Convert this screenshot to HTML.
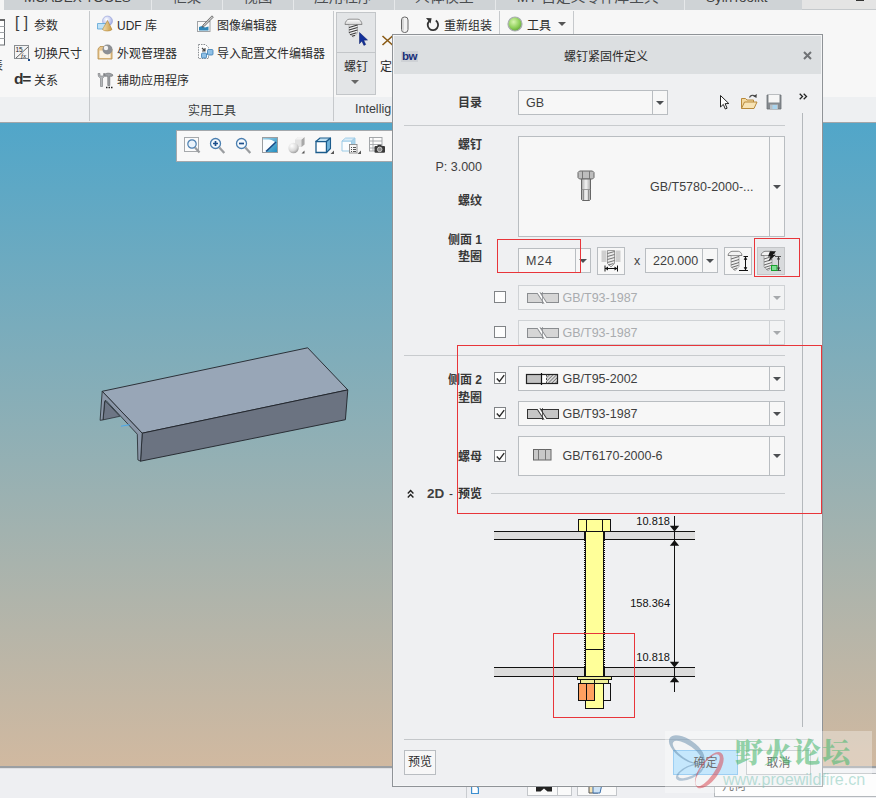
<!DOCTYPE html>
<html lang="zh-CN">
<head>
<meta charset="utf-8">
<title>螺钉紧固件定义</title>
<style>
html,body{margin:0;padding:0;}
body{width:876px;height:798px;overflow:hidden;position:relative;background:#f0f0f3;
 font-family:"Liberation Sans","Noto Sans CJK SC",sans-serif;font-size:12px;color:#2b2b2b;}
.abs{position:absolute;}
.t{position:absolute;white-space:nowrap;line-height:16px;height:16px;}
.b{font-weight:bold;}
.r{color:#383838;}
.en{color:#3f3f3f;}
.en{font-size:12.5px;}
.r{text-align:right;}
svg{position:absolute;overflow:visible;}
/* app chrome */
#tabs{left:0;top:0;width:876px;height:10px;background:#f5f5f5;overflow:hidden;}
#tabs .bg{left:4px;top:0;width:798px;height:10px;background:#cfd3d6;}
#tabs .bg2{left:802px;top:0;width:74px;height:9px;background:#e4e4e4;border-bottom:1px solid #c5c9cc;}
#tabs .sep{top:0;width:1px;height:10px;background:#e6e8ea;}
#tabs .t{top:-13px;font-size:14.67px;color:#4a4d50;line-height:20px;height:20px;}
#tabs .en{font-size:13.5px;}
#ribbon{left:0;top:10px;width:876px;height:87px;background:#f7f7f7;}
#riblab{left:0;top:97px;width:876px;height:25px;background:#eef0f2;}
#ribline{left:0;top:122px;width:876px;height:1px;background:#a3a6a9;}
.vsep{width:1px;background:#c6c9cc;}
#view{left:0;top:123px;width:876px;height:644px;background:linear-gradient(#51a6c9,#d1b9a0);}
#viewline{left:0;top:766px;width:876px;height:2px;background:#9b9fa3;}
#status{left:0;top:768px;width:876px;height:30px;background:#eeeff2;border-top:1px solid #dfe0e3;box-sizing:border-box;}
/* dialog */
#dlg{left:392px;top:34px;width:429px;height:751px;background:#eff0f2;border:1px solid #8f9397;box-sizing:content-box;box-shadow:inset 0 0 0 1px #f4f5f6;}
#dlgtitle{left:1px;top:1px;width:427px;height:38px;background:#dcdfe1;}
.box{position:absolute;box-sizing:border-box;border:1px solid #b9bdc1;background:#f7f7f7;}
.box.dis{border-color:#cfd2d5;background:#f2f3f4;}
.box .ds{position:absolute;top:0;bottom:0;right:14px;width:1px;background:#b9bdc1;}
.box .arr{right:3px;}
.box.dis .ds{background:#cfd2d5;}
.arr{position:absolute;width:0;height:0;border-left:4px solid transparent;border-right:4px solid transparent;border-top:4.500px solid #4c4f52;}
.arr.dis{border-top-color:#a6a9ac;}
.cb{position:absolute;box-sizing:border-box;width:12px;height:12px;border:1px solid #808386;background:#fdfdfd;}
.hl{position:absolute;height:1px;background:#c8cbce;}
.red{position:absolute;box-sizing:border-box;border:1px solid #e8353a;}
.btn{position:absolute;box-sizing:border-box;border:1px solid #b9bdc1;background:#f7f7f7;text-align:center;}
</style>
</head>
<body>
<!-- ===== application chrome ===== -->
<div id="tabs" class="abs">
 <div class="bg abs"></div><div class="bg2 abs"></div>
 <div class="abs" style="left:856px;top:0;width:8px;height:1px;background:#333"></div>
 <div class="sep abs" style="left:151px"></div>
 <div class="sep abs" style="left:222px"></div>
 <div class="sep abs" style="left:293px"></div>
 <div class="sep abs" style="left:394px"></div>
 <div class="sep abs" style="left:495px"></div>
 <div class="sep abs" style="left:684px"></div>
 <div class="t" style="left:24px"><span class="en">MCADEX TOOLS</span></div>
 <div class="t" style="left:172px">框架</div>
 <div class="t" style="left:243px">视图</div>
 <div class="t" style="left:314px">应用程序</div>
 <div class="t" style="left:415px">人体模型</div>
 <div class="t" style="left:517px"><span class="en">MY</span> 自定义零件库工具</div>
 <div class="t" style="left:706px"><span class="en">SylnToolkt</span></div>
</div>
<div id="ribbon" class="abs"></div>
<div id="riblab" class="abs"></div>
<div id="ribline" class="abs"></div>
<div class="vsep abs" style="left:89px;top:11px;height:110px"></div>
<div class="vsep abs" style="left:333px;top:11px;height:110px"></div>
<div class="vsep abs" style="left:499px;top:11px;height:24px"></div>
<div class="vsep abs" style="left:573px;top:11px;height:24px"></div>
<!-- ribbon group 1 -->
<svg style="left:0;top:19px" width="6" height="27" viewBox="0 0 6 27"><rect x="-12" y="1" width="16.500" height="25" fill="#fff" stroke="#6a6e72"/><path d="M-12 1h17" stroke="#555" stroke-width="1.600"/><path d="M-12 7.500H4.500M-12 13.500H4.500M-12 19.500H4.500" stroke="#a0a4a8" fill="none"/></svg>
<div class="t" style="left:-9px;top:58px">表</div>
<div class="t" style="left:-8px;top:101px;color:#555">▾</div>
<div class="t" style="left:15px;top:15px;font-size:15.500px;letter-spacing:4.500px;color:#3a3a3a;transform:scaleY(1.08);transform-origin:0 50%">[]</div>
<div class="t" style="left:34px;top:18px">参数</div>
<svg style="left:14px;top:45px" width="17" height="17" viewBox="0 0 17 17"><rect x="0.5" y="0.5" width="14" height="13" fill="#f4f4f4" stroke="#8a8e92"/><path d="M2 13L14 2" stroke="#666" fill="none"/><text x="1.5" y="7" font-size="6.5" font-family="Liberation Sans,sans-serif" fill="#222">15</text><text x="7" y="13" font-size="7" font-style="italic" font-family="Liberation Serif,serif" fill="#222">fx</text><rect x="14" y="14" width="2" height="2" fill="#1b4a8a"/></svg>
<div class="t" style="left:34px;top:46px">切换尺寸</div>
<div class="t b" style="left:14px;top:71px;font-size:15.5px;letter-spacing:-1.2px;color:#333">d=</div>
<div class="t" style="left:34px;top:73px">关系</div>
<!-- ribbon group 2 -->
<svg style="left:97px;top:16px" width="16" height="17" viewBox="0 0 16 17"><defs><radialGradient id="ud" cx=".4" cy=".35" r=".7"><stop offset="0" stop-color="#fff"/><stop offset="1" stop-color="#9aa6e2"/></radialGradient><linearGradient id="uc" x1="0" y1="0" x2="1" y2="0"><stop offset="0" stop-color="#f3dfb0"/><stop offset="1" stop-color="#c99a45"/></linearGradient></defs><circle cx="10.500" cy="5" r="5" fill="url(#ud)" stroke="#8a96d4" stroke-width=".5"/><path d="M.5 7.500h8.500v5.500H.5z" fill="#bfe2f7" stroke="#5ba3d4" stroke-width=".8"/><path d="M10.500 4.500L15 13.500c-2 2-7.500 2-9.500 0z" fill="url(#uc)" stroke="#b48734" stroke-width=".6"/></svg>
<div class="t" style="left:117px;top:18px">UDF 库</div>
<svg style="left:97px;top:43px" width="17" height="17" viewBox="0 0 17 17"><path d="M1 6l2-2.5h5L9.5 6H15v10H1z" fill="#e6c48c" stroke="#b58e4a" stroke-width=".8"/><rect x="2.5" y="7.500" width="11" height="7.500" fill="#fbf3e2"/><circle cx="10.5" cy="6.500" r="5" fill="#8d9094"/><circle cx="9" cy="5" r="2.200" fill="#f2f2f2"/></svg>
<div class="t" style="left:117px;top:46px">外观管理器</div>
<svg style="left:97px;top:72px" width="17" height="17" viewBox="0 0 17 17"><path d="M1 1.500l.5 3 2 1.700v8.300h2V6.200l2-1.700.5-3H6.500v2.500h-3.500v-2.500z" fill="#b4b7ba" stroke="#77797c" stroke-width=".6"/><path d="M7.500 2.500c2-1.800 6-1.800 8.500.5l-.8 1.200H12.800V13.500h-2V4.200H8z" fill="#a0a3a7" stroke="#606366" stroke-width=".6"/><path d="M9 15.500h1.500M11.500 15.500h1.500M14 15.500h1.500" stroke="#222" stroke-width="1.300"/></svg>
<div class="t" style="left:117px;top:73px">辅助应用程序</div>
<svg style="left:197px;top:15px" width="17" height="18" viewBox="0 0 17 18"><rect x=".5" y="6.500" width="12.500" height="10" fill="#fafafa" stroke="#a0a3a6"/><path d="M2 15.500v-3.500l3-1 3 1.500 3.500-1v4z" fill="#2f86b8"/><path d="M15 .8L6 10l-.8 2.200 2.100-.9L16.300 2.200z" fill="#c9c9c9" stroke="#4a4a4a" stroke-width=".7"/></svg>
<div class="t" style="left:217px;top:18px">图像编辑器</div>
<svg style="left:197px;top:43px" width="18" height="18" viewBox="0 0 18 18"><path d="M1.500 1.500h7l3 3V15.500h-10z" fill="#fdfdfd" stroke="#8a8e92" stroke-dasharray="1.500 1"/><path d="M5 5l3 3M8 5v3H5" stroke="#444" fill="none" stroke-width="1.100"/><rect x="4.500" y="10" width="5" height="5" rx="1" fill="#8fc0e6" stroke="#3c7fb4" stroke-width=".8"/><rect x="10.500" y="6.500" width="5.500" height="5.500" rx="1" fill="#8fc0e6" stroke="#3c7fb4" stroke-width=".8"/><path d="M9.500 12l1-1.500" stroke="#3c7fb4"/></svg>
<div class="t" style="left:217px;top:46px">导入配置文件编辑器</div>
<div class="t" style="left:188px;top:103px;color:#3a3d40">实用工具</div>
<!-- ribbon group 3 -->
<div class="abs" style="left:336px;top:12px;width:40px;height:83px;box-sizing:border-box;background:#e3e5e7;border:1px solid #c3c6c9"></div>
<div class="abs" style="left:337px;top:52px;width:38px;height:1px;background:#c3c6c9"></div>
<svg style="left:344px;top:17px" width="26" height="30" viewBox="0 0 26 30"><defs><linearGradient id="sh" x1="0" y1="0" x2="0" y2="1"><stop offset="0" stop-color="#fff"/><stop offset="1" stop-color="#d4d4d4"/></linearGradient></defs><path d="M1 7.500C1 4.500 3.500 2.200 5 2.200h9c1.500 0 4 2.300 4 5.300z" fill="url(#sh)" stroke="#7a7a7a" stroke-width=".8"/><path d="M5 7.700h8.500v8.500l-4.200 3.800L5 16.200z" fill="#f2f2f2" stroke="#8a8a8a" stroke-width=".5"/><path d="M5 10.500l8.500-2.500M5 13l8.500-2.500M5 15.500l8.500-2.500M6 17.700l6.500-2M8 19.300l3-1" stroke="#3a3a3a" stroke-width="1.100" fill="none"/><path d="M15.500 15.500l8 7.500-3.800.3 2 4.200-1.800.9-2-4.300-2.400 2.600z" fill="#12309a" stroke="#0a1c66" stroke-width=".5"/></svg>
<div class="t" style="left:344px;top:59px">螺钉</div>
<div class="arr" style="left:351px;top:80px;border-left-width:4px;border-right-width:4px;border-top-width:4px;border-top-color:#666"></div>
<svg style="left:380px;top:35px" width="13" height="11" viewBox="0 0 13 11"><path d="M2.500 1l10 9M2.500 10L12.500 1" stroke="#8a5a14" stroke-width="1.600" fill="none"/></svg>
<div class="t" style="left:380px;top:59px">定</div>
<div class="t" style="left:355px;top:101px;color:#3a3d40;font-size:12.500px">Intellig</div>
<!-- ribbon right strip -->
<svg style="left:400px;top:16px" width="10" height="18" viewBox="0 0 10 18"><rect x="1.500" y="1" width="6.500" height="15.500" rx="3" fill="#f2f2f2" stroke="#666"/><path d="M3 2.500v12" stroke="#bbb"/></svg>
<svg style="left:426px;top:17px" width="13" height="14" viewBox="0 0 13 14"><path d="M3.300 4.200A5.200 5.200 0 1 0 9.800 3.600" fill="none" stroke="#333" stroke-width="1.800"/><path d="M0 1l5.600.2-1 5.300z" fill="#333"/></svg>
<div class="t" style="left:444px;top:18px">重新组装</div>
<svg style="left:507px;top:16px" width="16" height="16" viewBox="0 0 16 16"><defs><radialGradient id="gb" cx=".4" cy=".35" r=".7"><stop offset="0" stop-color="#d8f5b0"/><stop offset=".6" stop-color="#8fd05a"/><stop offset="1" stop-color="#5fa036"/></radialGradient></defs><circle cx="8" cy="8" r="7" fill="url(#gb)" stroke="#a9adb0" stroke-width="1.200"/></svg>
<div class="t" style="left:527px;top:18px">工具</div>
<div class="arr" style="left:558px;top:22px;border-top-color:#555"></div>

<div id="view" class="abs"></div>
<div id="viewline" class="abs"></div>
<div id="status" class="abs"></div>

<!-- 3D model -->
<svg style="left:90px;top:340px" width="270" height="130" viewBox="90 340 270 130">
 <path d="M102.200 391.300L307.700 347.800L347.800 389.900L142.200 433.200z" fill="#98a6b7" stroke="#20242a" stroke-width=".9" stroke-linejoin="round"/>
 <path d="M142.200 433.200L347.800 389.900L345.400 419.700L140.500 461.200z" fill="#6b7381" stroke="#20242a" stroke-width=".9" stroke-linejoin="round"/>
 <path d="M105 400.600L103 419.900L119.900 416.300z" fill="#6d7685" stroke="#20242a" stroke-width=".7" stroke-linejoin="round"/>
 <path d="M102.200 391.300L100.100 420.300L103 419.900L104.600 401.500Q105 399.800 106.300 400.800L137.300 434.200L137.900 459.900L140.500 461.200L142.200 433.200z" fill="#8b97a8" stroke="#20242a" stroke-width=".8" stroke-linejoin="round"/>
 <path d="M121 426.200l9-1.500" stroke="#4aa8ee" stroke-width="1"/>
</svg>
<!-- graphics toolbar -->
<div class="abs" style="left:176px;top:130px;width:230px;height:32px;box-sizing:border-box;background:#f8f8f8;border:1px solid #a4a8ac"></div>
<svg style="left:184px;top:137px" width="17" height="17" viewBox="0 0 17 17"><rect x=".5" y=".5" width="14" height="14" fill="#fbfbfb" stroke="#a6a9ac"/><circle cx="8" cy="7" r="4.200" fill="#eaf3fb" stroke="#4b7fb0" stroke-width="1.200"/><path d="M11 10.500l4.500 5" stroke="#9a9da0" stroke-width="2.200"/></svg>
<svg style="left:209px;top:137px" width="17" height="17" viewBox="0 0 17 17"><circle cx="6.500" cy="6.500" r="5" fill="#f4f9fd" stroke="#4b7fb0" stroke-width="1.300"/><path d="M4 6.500h5M6.500 4v5" stroke="#1c4f8c" stroke-width="1.700"/><path d="M10.300 10.500l5 5.500" stroke="#9a9da0" stroke-width="2.300"/></svg>
<svg style="left:235px;top:137px" width="17" height="17" viewBox="0 0 17 17"><circle cx="6.500" cy="6.500" r="5" fill="#f4f9fd" stroke="#4b7fb0" stroke-width="1.300"/><path d="M4 6.500h5" stroke="#1c4f8c" stroke-width="1.700"/><path d="M10.300 10.500l5 5.500" stroke="#9a9da0" stroke-width="2.300"/></svg>
<svg style="left:262px;top:137px" width="16" height="16" viewBox="0 0 16 16"><defs><linearGradient id="rp" x1="0" y1="0" x2="1" y2="1"><stop offset="0" stop-color="#9fd3ea"/><stop offset="1" stop-color="#1f8cbf"/></linearGradient></defs><rect x=".5" y=".5" width="15" height="15" fill="url(#rp)" stroke="#9a9da0"/><path d="M1 2.500H7Q12.500 3.500 13.500 6L4 15H1z" fill="#fafdff"/><path d="M4 14.500l10-9.500" stroke="#174a86" stroke-width="1.600"/></svg>
<svg style="left:288px;top:137px" width="20" height="18" viewBox="0 0 20 18"><defs><radialGradient id="sp" cx=".35" cy=".3" r=".8"><stop offset="0" stop-color="#fff"/><stop offset=".6" stop-color="#d8d8d8"/><stop offset="1" stop-color="#909090"/></radialGradient></defs><path d="M7 2.500l3-2.500h6.500v7.500l-3 2.500H7z" fill="#e2e2e2"/><path d="M13.500 2.500l3-2.500v7.500l-3 2.500z" fill="#a8a8a8"/><path d="M7 2.500l3-2.500h6.500l-3 2.500z" fill="#f2f2f2"/><circle cx="5.500" cy="11" r="5.200" fill="url(#sp)"/><path d="M16.500 13.500v3h-3z" fill="#555"/></svg>
<svg style="left:315px;top:137px" width="20" height="18" viewBox="0 0 20 18"><path d="M1 4.500h10.500V15.500H1z" fill="#fff" stroke="#1c5c8c" stroke-width="1.300"/><path d="M1 4.500L5 1h10.500L11.500 4.500z" fill="#bfe0f2" stroke="#1c5c8c" stroke-width="1.100" stroke-linejoin="round"/><path d="M11.500 4.500L15.500 1V11.500L11.500 15.500z" fill="#6fb3da" stroke="#1c5c8c" stroke-width="1.100" stroke-linejoin="round"/><path d="M19 13.500v3.500h-3.500z" fill="#555"/></svg>
<svg style="left:341px;top:137px" width="21" height="18" viewBox="0 0 21 18"><path d="M1 4h9.500v10H1z" fill="#fbfdfe" stroke="#9ccbe6" stroke-width="1"/><path d="M1 4L4.500 1H14L10.500 4z" fill="#d8ecf7" stroke="#9ccbe6" stroke-width=".9"/><path d="M10.500 4L14 1V10.500L10.500 14z" fill="#a9d3ea" stroke="#9ccbe6" stroke-width=".9"/><rect x="8.500" y="7.500" width="7.500" height="8.500" fill="#f6f6f6" stroke="#8a8a8a" stroke-width=".9"/><path d="M10 10.500h1M12 10.500h2.500M10 12.500h1M12 12.500h2.500M10 14.500h1M12 14.500h2.500" stroke="#555" stroke-width="1" shape-rendering="crispEdges"/><path d="M20 13.500v3.500h-3.500z" fill="#555"/></svg>
<svg style="left:368px;top:137px" width="18" height="17" viewBox="0 0 18 17"><rect x="1.500" y=".5" width="12.500" height="13.500" fill="#fcfcfc" stroke="#a4a7aa"/><path d="M1.500 4h12.500M1.500 7.500h12.500M1.500 11h12.500M5 .5v13.500" stroke="#a4a7aa" stroke-width=".9"/><rect x="6.500" y="9" width="10.500" height="6.800" rx="1" fill="#3a3a3a"/><rect x="9.500" y="7.800" width="4" height="1.800" fill="#3a3a3a"/><circle cx="11.700" cy="12.400" r="2.300" fill="#8d8d8d" stroke="#dedede" stroke-width=".8"/></svg>
<!-- status bar -->
<div class="abs" style="left:466px;top:770px;width:1px;height:28px;background:#c9ccd0"></div>
<svg style="left:471px;top:786px" width="8" height="9" viewBox="0 0 8 9"><path d="M.6 0h5l1.800 2v5.500H.6z" fill="#fff" stroke="#3c8fd0" stroke-width="1.200"/></svg>
<div class="abs" style="left:527px;top:770px;width:45px;height:26px;box-sizing:border-box;background:#fafafa;border:1px solid #c3c6ca"></div>
<div class="abs" style="left:557px;top:771px;width:1px;height:24px;background:#c3c6ca"></div>
<svg style="left:536px;top:786px" width="16" height="6" viewBox="0 0 16 6"><path d="M0 0h16v5.500h-4.500L8 2.500 4.500 5.500H0z" fill="#222"/></svg>
<div class="abs" style="left:577px;top:770px;width:40px;height:26px;box-sizing:border-box;background:#fafafa;border:1px solid #c3c6ca"></div>
<svg style="left:588px;top:784px" width="16" height="10" viewBox="0 0 16 10"><path d="M1 0h9v9H1z" fill="#f7e3b4" stroke="#555" stroke-width="1"/><path d="M5 0h9l-2 9H5z" fill="#cfe3f5" stroke="#3c6fa8" stroke-width="1"/></svg>
<div class="abs" style="left:714px;top:773px;width:170px;height:24px;box-sizing:border-box;background:#fdfdfd;border:1px solid #b4b8bc"></div>
<div class="t" style="left:722px;top:778px;font-size:12px;color:#444">几何</div>
<!-- ===== dialog ===== -->
<div id="dlg" class="abs">
 <div id="dlgtitle" class="abs"></div>
</div>
<!-- title -->
<div class="abs" style="left:401px;top:51px;width:17px;height:11px;background:#ced1d5"></div>
<div class="t b" style="left:402px;top:48px;font-size:11.500px;letter-spacing:-.5px;color:#182f7a">bw</div>
<div class="t" style="left:564px;top:49px;color:#2b2b2b">螺钉紧固件定义</div>
<svg style="left:803px;top:51px" width="9" height="9" viewBox="0 0 9 9"><path d="M1 1l7 7M8 1L1 8" stroke="#6f7275" stroke-width="2" fill="none"/></svg>
<!-- row: catalog -->
<div class="t b r" style="left:402px;width:80px;top:95px">目录</div>
<div class="box" style="left:518px;top:90px;width:150px;height:25px"><div class="ds"></div><div class="arr" style="top:10px"></div></div>
<div class="t en" style="left:526px;top:95px">GB</div>
<svg style="left:719px;top:94px" width="11" height="17" viewBox="0 0 11 17"><path d="M1.500 1.500v11.500l2.800-2.600 2 4.600 1.800-.8-2-4.500 3.700-.2z" fill="#fff" stroke="#222" stroke-width="1"/></svg>
<svg style="left:740px;top:93px" width="18" height="17" viewBox="0 0 18 17"><path d="M1.500 15.500V5.500h4l1.500 1.500h6.500v2.500" fill="#f3d9a0" stroke="#b8893a" stroke-width="1"/><path d="M1.500 15.500l3-6.500h12.500l-3 6.500z" fill="#f7e3b4" stroke="#b8893a" stroke-width="1"/><path d="M9.500 4.500c1-2.500 4-3 5.500-1" fill="none" stroke="#444" stroke-width="1.200"/><path d="M16.800 1l-.3 4-3.300-1.800z" fill="#444"/></svg>
<svg style="left:766px;top:94px" width="16" height="16" viewBox="0 0 16 16"><path d="M1 1h14v14H1z" fill="#858a8f" stroke="#6a6f74" stroke-width=".8"/><rect x="2.500" y="1" width="11" height="7.500" fill="#f6f6f6"/><rect x="4" y="10.500" width="8" height="4.500" fill="#b9c0c6"/><rect x="6.500" y="11" width="4.500" height="4" fill="#a9d4ee"/></svg>
<svg style="left:799px;top:93px" width="9" height="7" viewBox="0 0 9 7"><path d="M.7 .8l2.800 2.700-2.800 2.700M4.700 .8l2.800 2.700-2.800 2.700" fill="none" stroke="#222" stroke-width="1.300"/></svg>
<div class="hl" style="left:404px;top:125px;width:381px"></div>
<div class="abs" style="left:802px;top:113px;width:1px;height:614px;background:#b4b8bc"></div>
<div class="hl" style="left:404px;top:739px;width:410px;background:#c4c7ca"></div>

<!-- screw section -->
<div class="t b r" style="left:402px;width:80px;top:137px">螺钉</div>
<div class="t r en" style="left:402px;width:80px;top:159px">P: 3.000</div>
<div class="t b r" style="left:402px;width:80px;top:193px">螺纹</div>
<div class="box" style="left:518px;top:136px;width:267px;height:101px"><div class="ds"></div><div class="arr" style="top:48px"></div></div>
<svg style="left:577px;top:170px" width="18" height="31" viewBox="0 0 18 31"><defs><linearGradient id="bs" x1="0" y1="0" x2="1" y2="0"><stop offset="0" stop-color="#a8a8a8"/><stop offset=".5" stop-color="#f4f4f4"/><stop offset="1" stop-color="#a8a8a8"/></linearGradient></defs><path d="M1 2.500L2.500 1h13L17 2.500v5L15.500 9h-13L1 7.500z" fill="#bdbdbd" stroke="#666" stroke-width="1"/><path d="M5.500 1v8M12.500 1v8" stroke="#777" stroke-width="1"/><path d="M4.500 9h9v20.500l-1 1h-7l-1-1z" fill="url(#bs)" stroke="#666" stroke-width="1"/><path d="M4.500 19.500h9" stroke="#888" stroke-width=".8"/><path d="M6.500 20v10M11.500 20v10" stroke="#8a8a8a" stroke-width=".9"/></svg>
<div class="t en" style="left:650px;top:179px">GB/T5780-2000-...</div>
<div class="t b r" style="left:402px;width:80px;top:232px">侧面 1</div>
<div class="t b r" style="left:402px;width:80px;top:249px">垫圈</div>
<div class="box" style="left:518px;top:248px;width:73px;height:25px"><div class="ds"></div><div class="arr" style="top:10px"></div></div>
<div class="t en" style="left:526px;top:253px;letter-spacing:.8px">M24</div>
<div class="btn" style="left:597px;top:247px;width:28px;height:28px"></div>
<svg style="left:598px;top:248px" width="26" height="26" viewBox="0 0 26 26"><rect x="3.500" y="2.500" width="5" height="11.500" fill="#cfcfcf"/><rect x="17.500" y="2.500" width="5" height="11.500" fill="#cfcfcf"/><path d="M9.500 2.500h7v13l-3.500 3.500-3.500-3.500z" fill="#ececec" stroke="#777" stroke-width=".7"/><path d="M9.500 5.500l7-2M9.500 8.500l7-2M9.500 11.500l7-2M9.500 14.500l7-2M10.500 17l5-1.500" stroke="#666" stroke-width=".9"/><path d="M7 17.500v6M19.500 17.500v6M7 20.500h12.500" stroke="#111" stroke-width="1" fill="none"/><path d="M7 20.500l3-2v4zM19.500 20.500l-3-2v4z" fill="#111"/></svg>
<div class="t en" style="left:634px;top:253px">x</div>
<div class="box" style="left:645px;top:248px;width:73px;height:25px"><div class="ds"></div><div class="arr" style="top:10px"></div></div>
<div class="t en" style="left:653px;top:253px">220.000</div>
<div class="btn" style="left:724px;top:247px;width:28px;height:28px"></div>
<svg style="left:724px;top:247px" width="28" height="28" viewBox="0 0 28 28"><path d="M4 8.500C4 6 7 4.300 8 4.300h6.500C15.500 4.300 18 6 18 8.500z" fill="#f2f2f2" stroke="#6a6a6a" stroke-width=".8"/><path d="M7 8.600h8V19.500l-4 4.300-4-4.300z" fill="#efefef" stroke="#808080" stroke-width=".6"/><path d="M7 12l8-2.500M7 15l8-2.500M7 18l8-2.500M7.500 20.500l7-2.200M9.500 22.500l3.500-1.500" stroke="#5a5a5a" stroke-width=".9" fill="none"/><path d="M21.500 9.500v14M19.500 9.500h4.500M15 23.500h9" stroke="#111" stroke-width="1" fill="none"/><path d="M21.500 9.500l-1.800 3.200h3.600zM21.500 23.500l-1.800-3.200h3.600z" fill="#111"/></svg>
<div class="abs" style="left:757px;top:247px;width:28px;height:28px;box-sizing:border-box;background:#d8dadc;border:1px solid #c3c5c7"></div>
<svg style="left:757px;top:247px" width="28" height="28" viewBox="0 0 28 28"><path d="M4 8.500C4 6 7 4.300 8 4.300h6.500C15.500 4.300 18 6 18 8.500z" fill="#f2f2f2" stroke="#6a6a6a" stroke-width=".8"/><path d="M7 8.600h8V19.500l-4 4.300-4-4.300z" fill="#efefef" stroke="#808080" stroke-width=".6"/><path d="M7 12l8-2.500M7 15l8-2.500M7 18l8-2.500M7.500 20.500l7-2.200M9.500 22.500l3.500-1.500" stroke="#5a5a5a" stroke-width=".9" fill="none"/><path d="M13 4.200h6L16 8h2.500l-7.100 6.400 2.100-4.900H11z" fill="#181818"/><path d="M21.500 9.500v14M18 9.500h6M20 23.500h4" stroke="#333" stroke-width=".8" fill="none"/><path d="M21.500 9.500l-1.600 3h3.200zM21.500 23.500l-1.600-3h3.200z" fill="#333"/><rect x="14.500" y="18.500" width="5.500" height="5" fill="#80de96" stroke="#18a02c" stroke-width="1"/></svg>
<div class="red" style="left:497px;top:239px;width:84px;height:34px"></div>
<div class="red" style="left:754px;top:238px;width:46px;height:39px"></div>
<!-- side 1 washers (disabled) -->
<div class="cb" style="left:494px;top:291px"></div>
<div class="box dis" style="left:518px;top:285px;width:267px;height:25px"><div class="ds"></div><div class="arr dis" style="top:10px"></div></div>
<div class="t en" style="left:562.500px;top:290px;color:#a9acaf">GB/T93-1987</div>
<div class="cb" style="left:494px;top:326px"></div>
<div class="box dis" style="left:518px;top:320px;width:267px;height:25px"><div class="ds"></div><div class="arr dis" style="top:10px"></div></div>
<div class="t en" style="left:562.500px;top:325px;color:#a9acaf">GB/T93-1987</div>
<div class="hl" style="left:404px;top:355px;width:381px"></div>
<!-- side 2 -->
<div class="t b r" style="left:402px;width:80px;top:372px">侧面 2</div>
<div class="t b r" style="left:402px;width:80px;top:390px">垫圈</div>
<div class="cb" style="left:494px;top:372px"></div>
<div class="box" style="left:518px;top:366px;width:267px;height:25px"><div class="ds"></div><div class="arr" style="top:10px"></div></div>
<div class="t en" style="left:562.500px;top:371px">GB/T95-2002</div>
<div class="cb" style="left:494px;top:407px"></div>
<div class="box" style="left:518px;top:401px;width:267px;height:25px"><div class="ds"></div><div class="arr" style="top:10px"></div></div>
<div class="t en" style="left:562.500px;top:406px">GB/T93-1987</div>
<div class="t b r" style="left:402px;width:80px;top:449px">螺母</div>
<div class="cb" style="left:494px;top:450px"></div>
<div class="box" style="left:518px;top:436px;width:267px;height:40px"><div class="ds"></div><div class="arr" style="top:17px"></div></div>
<div class="t en" style="left:562.500px;top:448px">GB/T6170-2000-6</div>
<svg style="left:527px;top:292px" width="32" height="12" viewBox="0 0 32 12"><rect x=".5" y="1.500" width="31" height="9" fill="#d6d6d6" stroke="#8a8d90" stroke-width="1"/><path d="M11.700 1l6.600 10" stroke="#8a8d90" stroke-width="3.600"/><path d="M11.400 .5l7.200 11" stroke="#fff" stroke-width="1.800"/><path d="M15.500 0v12" stroke="#8a8d90" stroke-width=".8"/></svg>
<svg style="left:527px;top:327px" width="32" height="12" viewBox="0 0 32 12"><rect x=".5" y="1.500" width="31" height="9" fill="#d6d6d6" stroke="#8a8d90" stroke-width="1"/><path d="M11.700 1l6.600 10" stroke="#8a8d90" stroke-width="3.600"/><path d="M11.400 .5l7.200 11" stroke="#fff" stroke-width="1.800"/><path d="M15.500 0v12" stroke="#8a8d90" stroke-width=".8"/></svg>
<svg style="left:526px;top:373px" width="32" height="12" viewBox="0 0 32 12"><defs><pattern id="hh" width="2.500" height="2.500" patternUnits="userSpaceOnUse" patternTransform="rotate(45)"><rect width="2.500" height="2.500" fill="#d8d8d8"/><path d="M0 0v2.500" stroke="#555" stroke-width="1.200"/></pattern></defs><rect x=".5" y="1.500" width="15" height="9" fill="#c2c2c2"/><rect x="15.500" y="1.500" width="5" height="9" fill="#fff"/><rect x="20.500" y="1.500" width="11" height="9" fill="url(#hh)"/><rect x=".5" y="1.500" width="31" height="9" fill="none" stroke="#222" stroke-width="1.200"/><path d="M15.500 0v12" stroke="#111" stroke-width="1.200"/><path d="M20.500 1.500v9" stroke="#444" stroke-width="1" stroke-dasharray="2 1.500"/></svg>
<svg style="left:527px;top:408px" width="32" height="12" viewBox="0 0 32 12"><rect x=".5" y="1.500" width="31" height="9" fill="#c6c6c6" stroke="#333" stroke-width="1"/><path d="M11.700 1l6.600 10" stroke="#333" stroke-width="3.600"/><path d="M11.400 .5l7.200 11" stroke="#fff" stroke-width="1.800"/><path d="M15.500 0v12" stroke="#333" stroke-width=".8"/></svg>
<svg style="left:533px;top:449px" width="19" height="12" viewBox="0 0 19 12"><rect x=".5" y=".5" width="17.500" height="10.500" fill="#c9c9c9" stroke="#666" stroke-width="1"/><path d="M5.500 .5v10.500M12.500 .5v10.500" stroke="#777" stroke-width="1"/></svg>
<svg style="left:494px;top:372px" width="13" height="13" viewBox="0 0 13 13"><path d="M2.800 6.500l2.700 3 4.700-6.300" fill="none" stroke="#2a2a2a" stroke-width="1.400"/></svg>
<svg style="left:494px;top:407px" width="13" height="13" viewBox="0 0 13 13"><path d="M2.800 6.500l2.700 3 4.700-6.300" fill="none" stroke="#2a2a2a" stroke-width="1.400"/></svg>
<svg style="left:494px;top:450px" width="13" height="13" viewBox="0 0 13 13"><path d="M2.800 6.500l2.700 3 4.700-6.300" fill="none" stroke="#2a2a2a" stroke-width="1.400"/></svg>
<!-- 2D preview header -->
<svg style="left:406px;top:489px" width="9" height="10" viewBox="0 0 9 10"><path d="M1.800 4.500l2.800-3 2.800 3M1.800 8.500l2.800-3 2.800 3" fill="none" stroke="#222" stroke-width="1.400"/></svg>
<div class="t b" style="left:427px;top:486px;word-spacing:1.500px;color:#333"><span class="en" style="font-size:13.500px">2D</span> <span style="font-weight:normal">-</span> 预览</div>
<div class="hl" style="left:491px;top:493px;width:294px"></div>
<div class="red" style="left:457px;top:345px;width:365px;height:169px"></div>
<!-- 2D preview drawing -->
<svg style="left:480px;top:510px" width="240" height="215" viewBox="480 510 240 215" shape-rendering="crispEdges">
 <!-- plates -->
 <rect x="494" y="531" width="201" height="9" fill="#dcdcdc"/>
 <rect x="494" y="531" width="201" height="1" fill="#111"/><rect x="494" y="539" width="201" height="1" fill="#111"/>
 <rect x="494" y="667" width="201" height="10" fill="#dcdcdc"/>
 <rect x="494" y="667" width="201" height="1" fill="#111"/><rect x="494" y="676" width="201" height="1" fill="#111"/>
 <!-- bolt shank -->
 <rect x="586" y="531" width="17" height="178" fill="#ffff99"/>
 <rect x="585" y="540" width="1" height="169" fill="#111"/><rect x="603" y="540" width="1" height="169" fill="#111"/>
 <path d="M584.500 540v127M604.500 540v127" stroke="#111" stroke-width="1" stroke-dasharray="1 1"/>
 <rect x="584" y="531" width="2" height="9" fill="#111"/><rect x="603" y="531" width="2" height="9" fill="#111"/>
 <rect x="584" y="667" width="2" height="10" fill="#111"/><rect x="603" y="667" width="2" height="10" fill="#111"/>
 <rect x="586" y="649" width="17" height="1" fill="#111"/>
 <rect x="585" y="708" width="19" height="1" fill="#111"/>
 <!-- head -->
 <rect x="578" y="519" width="33" height="13" fill="#111"/>
 <rect x="579" y="520" width="7" height="11" fill="#ffff99"/><rect x="587" y="520" width="15" height="11" fill="#ffff99"/><rect x="603" y="520" width="7" height="11" fill="#ffff99"/>
 <!-- washers -->
 <rect x="577" y="676" width="35" height="4" fill="#111"/><rect x="578" y="677" width="33" height="2" fill="#eeee99"/>
 <rect x="580" y="679" width="29" height="5" fill="#111"/><rect x="581" y="680" width="13" height="3" fill="#eeee99"/><rect x="595" y="680" width="13" height="3" fill="#eeee99"/>
 <!-- nut -->
 <rect x="578" y="683" width="17" height="18" fill="#111"/>
 <rect x="579" y="684" width="7" height="16" fill="#ffa060"/><rect x="587" y="684" width="7" height="16" fill="#ffa060"/>
 <rect x="603" y="683" width="8" height="18" fill="#111"/><rect x="604" y="684" width="6" height="16" fill="#f0f0f0"/>
 <!-- dimension -->
 <rect x="674" y="516" width="1" height="176" fill="#111"/>
 <g shape-rendering="geometricPrecision" fill="#111">
  <path d="M674.500 531.500l-4.700-5.700h9.400z"/>
  <path d="M674.500 540l-4.700 5.700h9.400z"/>
  <path d="M674.500 667.500l-4.700-5.700h9.400z"/>
  <path d="M674.500 676.500l-4.700 5.700h9.400z"/>
 </g>
 <g shape-rendering="geometricPrecision" font-family="Liberation Sans, sans-serif" font-size="11" fill="#111" text-anchor="end">
  <text x="670" y="525">10.818</text>
  <text x="670" y="607">158.364</text>
  <text x="670" y="661">10.818</text>
 </g>
</svg>
<div class="red" style="left:553px;top:633px;width:82px;height:85px"></div>
<!-- bottom buttons -->
<div class="btn" style="left:404px;top:750px;width:32px;height:25px;line-height:23px">预览</div>
<div class="btn" style="left:673px;top:750px;width:65px;height:25px;line-height:24px;background:#aadcfb;border-color:#6fb9ee">确定</div>
<div class="btn" style="left:746px;top:750px;width:65px;height:25px;line-height:24px">取消</div>
<!-- watermark -->
<div class="abs" style="left:665px;top:731px;width:207px;height:62px;background:rgba(255,255,255,.32)"></div>
<svg style="left:665px;top:731px" width="70" height="62" viewBox="0 0 70 62">
 <g fill-rule="evenodd">
 <path transform="rotate(35 21.700 18.600)" fill="#5b84a6" fill-opacity=".48" d="M1.200 18.600a20.500 10 0 1 0 41 0a20.500 10 0 1 0-41 0zM6.500 20.300a17.300 6.600 0 1 0 34.600 0a17.300 6.600 0 1 0-34.600 0z"/>
 <path transform="rotate(-25 24.800 41.200)" fill="#5b84a6" fill-opacity=".42" d="M9.800 41.200a15 6.500 0 1 0 30 0a15 6.500 0 1 0-30 0zM12.500 40.600a13.200 4.600 0 1 0 26.400 0a13.200 4.600 0 1 0-26.400 0z"/>
 <path transform="rotate(-55 44.300 39.200)" fill="#d94a55" fill-opacity=".55" d="M23.300 39.200a21 9.500 0 1 0 42 0a21 9.500 0 1 0-42 0zM24.300 37.800a19 6.600 0 1 0 38 0a19 6.600 0 1 0-38 0z"/>
 </g>
</svg>
<div class="t b" style="left:735px;top:736px;height:36px;line-height:36px;font-weight:900;font-family:'Liberation Serif','Noto Serif CJK SC',serif;font-size:28px;letter-spacing:1px;color:rgba(80,185,115,.6)">野火论坛</div>
<div class="t" style="left:723px;top:768px;height:22px;line-height:22px;font-size:16.100px;color:rgba(120,195,180,.5)">www.proewildfire.cn</div>
</body>
</html>
